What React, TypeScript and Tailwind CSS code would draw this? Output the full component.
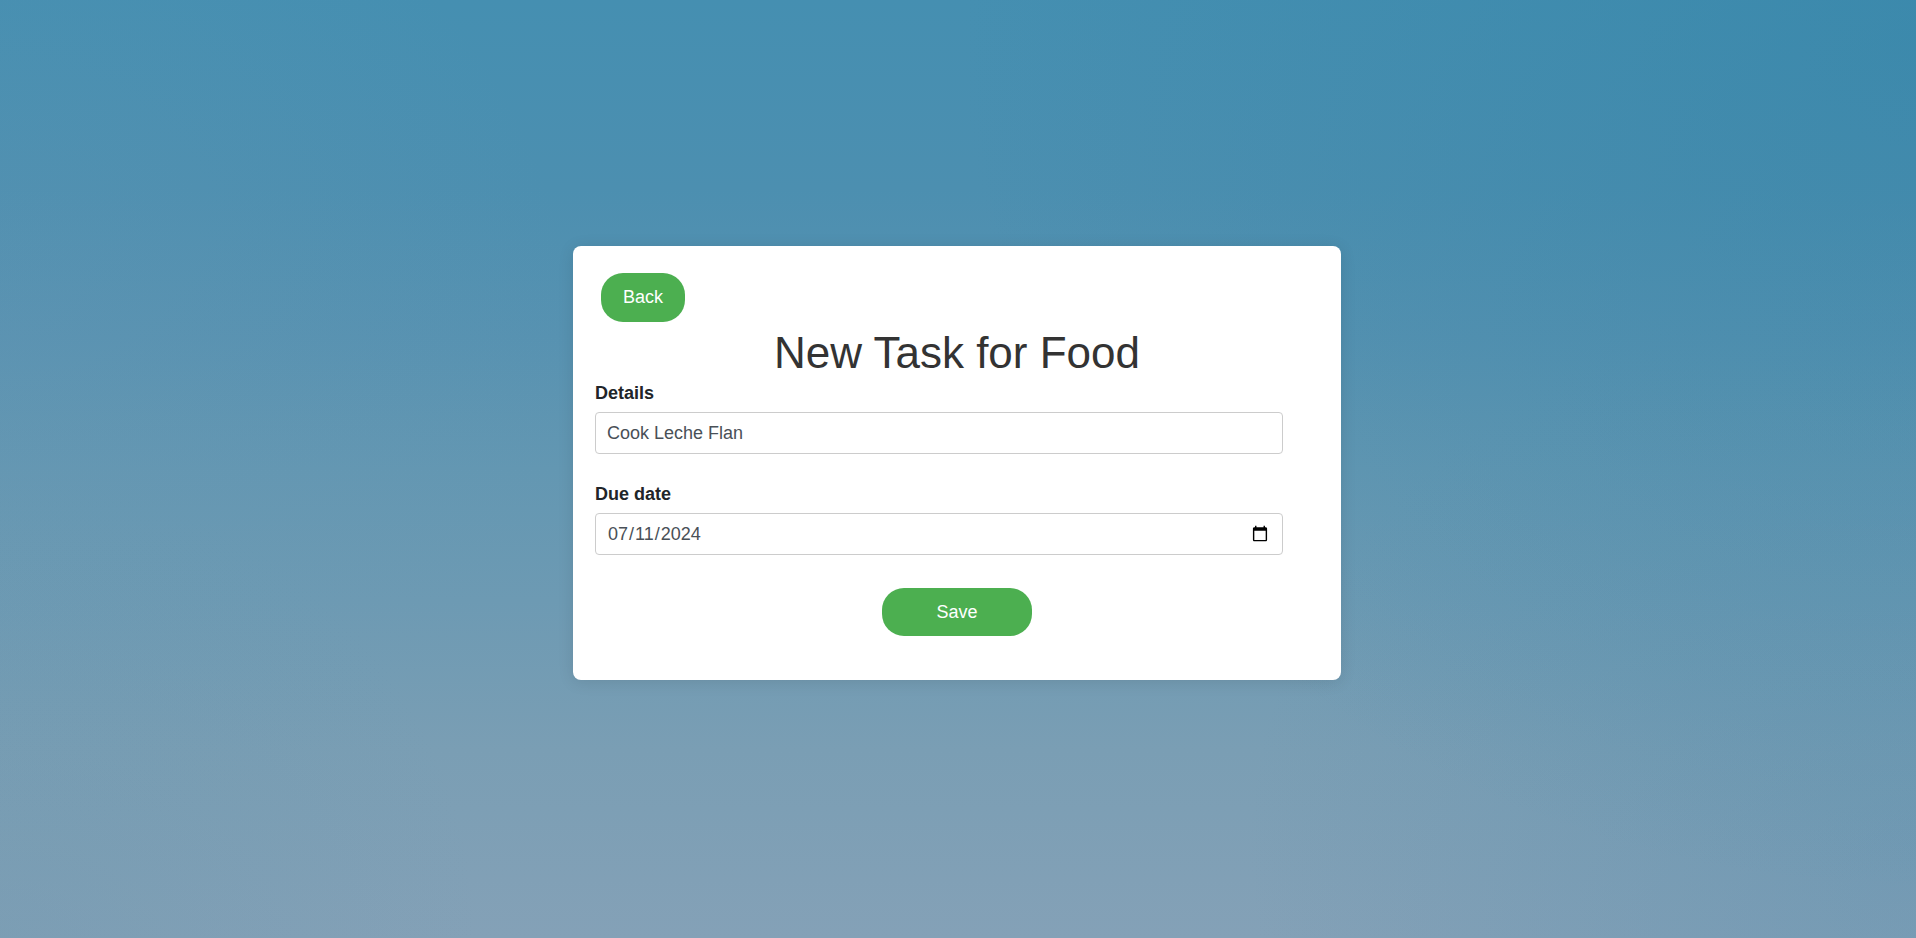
import { useState } from "react";

const skyClasses =
  "bg-[radial-gradient(ellipse_50%_90%_at_100%_5%,rgba(44,128,164,0.38),transparent),radial-gradient(ellipse_35%_60%_at_100%_90%,rgba(88,142,174,0.35),transparent),radial-gradient(ellipse_30%_55%_at_0%_35%,rgba(112,152,180,0.2),transparent),radial-gradient(ellipse_25%_50%_at_0%_100%,rgba(100,148,172,0.25),transparent),linear-gradient(180deg,#458fb1_0%,#4c8fb0_20%,#5792b1_36%,#6397b2_50%,#6d9ab3_64%,#7a9eb4_80%,#84a1b7_100%)]";

const inputClasses =
  "block h-[42px] w-full rounded border border-[#cccccc] bg-white px-[11px] text-lg leading-[27px] text-[#495057] outline-none focus:border-[#4caf50]";

const buttonClasses =
  "rounded-[22px] bg-[#4caf50] text-lg leading-[27px] text-white hover:bg-[#45a049]";

export default function App() {
  const [details, setDetails] = useState("Cook Leche Flan");
  const [dueDate, setDueDate] = useState("2024-07-11");

  return (
    <div
      className={`flex min-h-screen items-center justify-center pr-0.5 pb-3 font-['Liberation_Sans',Arial,sans-serif] text-[#212529] ${skyClasses}`}
    >
      <main className="w-full max-w-[768px] rounded-lg bg-white px-[22px] pt-[27px] pb-11 shadow-[0_2px_16px_rgba(0,0,0,0.1)]">
        <button type="button" className={`ml-1.5 block px-[22px] py-[11px] ${buttonClasses}`}>
          Back
        </button>
        <h1 className="mt-1 text-center text-[44px] leading-[54px] text-[#333333]">New Task for Food</h1>
        <form onSubmit={(event) => event.preventDefault()}>
          <div className="mr-9 flex flex-col gap-[27px]">
            <div className="flex flex-col gap-[5px]">
              <label htmlFor="details" className="text-lg leading-[27px] font-bold">
                Details
              </label>
              <input
                id="details"
                type="text"
                value={details}
                onChange={(event) => setDetails(event.target.value)}
                className={inputClasses}
              />
            </div>
            <div className="flex flex-col gap-[5px]">
              <label htmlFor="due-date" className="text-lg leading-[27px] font-bold">
                Due date
              </label>
              <input
                id="due-date"
                type="date"
                value={dueDate}
                onChange={(event) => setDueDate(event.target.value)}
                className={inputClasses}
              />
            </div>
          </div>
          <button type="submit" className={`mx-auto mt-[33px] block h-12 w-[150px] ${buttonClasses}`}>
            Save
          </button>
        </form>
      </main>
    </div>
  );
}
